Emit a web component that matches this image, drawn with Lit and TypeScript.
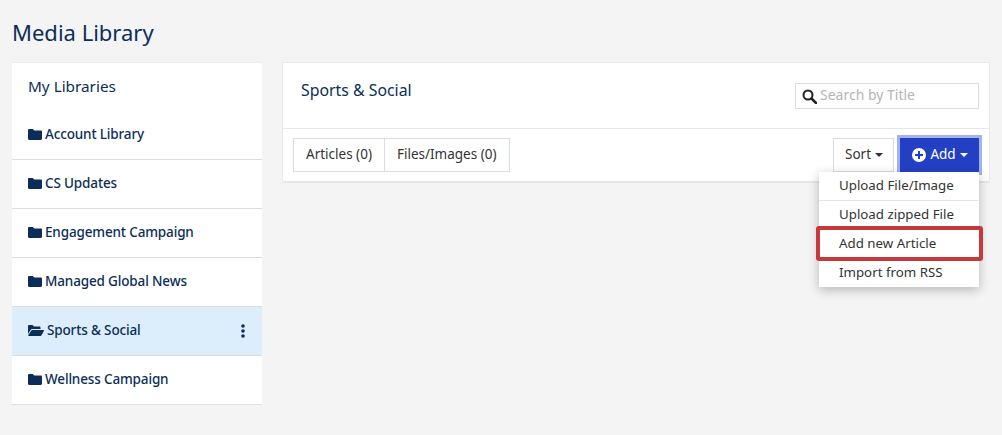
import { LitElement, html, css } from 'lit';
import { customElement } from 'lit/decorators.js';

const libraries = ['Account Library', 'CS Updates', 'Engagement Campaign', 'Managed Global News', 'Sports & Social', 'Wellness Campaign'];
const ACTIVE = 'Sports & Social';

const folder = html`<svg class="folder" viewBox="0 0 14 11"><path d="M1.2 0h3.6l1.4 1.5h6.6c.7 0 1.2.5 1.2 1.2v7.1c0 .7-.5 1.2-1.2 1.2H1.2C.5 11 0 10.500 0 9.800V1.200C0 .5.5 0 1.200 0z"/></svg>`;
const folderOpen = html`<svg class="folder open" viewBox="0 0 16 11"><path d="M0 9V1.200C0 .5.500 0 1.200 0h3.400l1.400 1.500h5.300c.7 0 1.200.5 1.200 1.200V4H4.200C3.500 4 2.900 4.400 2.600 5L0 9z"/><path d="M4.300 5h11c.5 0 .8.500.6 1l-2.400 4.300c-.2.400-.6.700-1.100.7H.9c-.5 0-.8-.5-.6-1l2.900-4.300c.2-.4.600-.7 1.100-.7z"/></svg>`;

@customElement('app-root')
export class AppRoot extends LitElement {
  static styles = css`
    :host {
      display: block;
      height: 435px;
      overflow: hidden;
      background: #f4f4f4;
      color: #0b2e58;
      font-family: 'Noto Sans', 'Open Sans', sans-serif;
      font-size: 14px;
    }

    h1 {
      margin: 0;
      padding: 16px 12px 0;
      height: 62px;
      box-sizing: border-box;
      font-size: 22px;
      line-height: 32px;
      font-weight: 400;
    }

    .page {
      display: flex;
      align-items: flex-start;
      gap: 20px;
      padding: 0 12px;
    }

    .sidebar {
      width: 250px;
      flex: none;
      background: #fff;
      border-top: 1px solid #eee;
    }

    .sidebar h2 {
      margin: 0;
      height: 48px;
      padding: 11px 16px 0;
      box-sizing: border-box;
      font-size: 15.300px;
      line-height: 24px;
      font-weight: 400;
    }

    .lib {
      display: flex;
      align-items: center;
      height: 49px;
      box-sizing: border-box;
      padding: 0 16px 1px;
      gap: 3px;
      border-bottom: 1px solid #ddd;
      font-size: 13.500px;
      letter-spacing: -0.15px;
      font-weight: 500;
    }

    .lib span {
      padding-bottom: 2px;
    }

    .lib.active {
      background: #dcedfb;
    }

    .folder {
      width: 14px;
      height: 11px;
      fill: #0b2e58;
      flex: none;
    }

    .folder.open {
      width: 16px;
    }

    .dots {
      margin-left: auto;
      width: 4px;
      height: 14px;
      margin-right: 1px;
      fill: #0b2e58;
    }

    .panel {
      width: 708px;
      flex: none;
      box-sizing: border-box;
      background: #fff;
      border: 1px solid #eaeaea;
      border-bottom: 2px solid #e6e6e6;
      height: 121px;
    }

    .head {
      display: flex;
      justify-content: space-between;
      height: 66px;
      box-sizing: border-box;
      padding: 0 10px 0 18px;
      border-bottom: 1px solid #e6e6e6;
    }

    .head h2 {
      margin: 0;
      padding-top: 15px;
      font-size: 15.850px;
      line-height: 24px;
      font-weight: 400;
    }

    .search {
      display: flex;
      align-items: center;
      gap: 3px;
      align-self: flex-start;
      margin-top: 20px;
      width: 184px;
      height: 26px;
      box-sizing: border-box;
      padding: 0 6px;
      border: 1px solid #ddd;
      color: #b5b5b5;
      font-size: 14px;
    }

    .search span {
      padding-bottom: 4px;
    }

    .search svg {
      width: 15px;
      height: 15px;
      flex: none;
    }

    .bar {
      display: flex;
      align-items: flex-start;
      padding: 9px 10px 0;
      gap: 6px;
    }

    .tabs {
      display: flex;
      margin-right: auto;
      height: 34px;
      border: 1px solid #ddd;
      box-sizing: border-box;
      color: #333;
    }

    .tabs span {
      display: flex;
      align-items: center;
      padding: 0 12px 2px;
      font-size: 13.500px;
    }

    .tabs span + span {
      border-left: 1px solid #ddd;
    }

    .btn {
      display: flex;
      align-items: center;
      justify-content: center;
      height: 34px;
      box-sizing: border-box;
      gap: 4px;
      padding: 0 0 2px 1px;
      font-size: 13.500px;
    }

    .sort {
      width: 61px;
      border: 1px solid #ddd;
      color: #333;
    }

    .caret {
      width: 0;
      height: 0;
      margin-top: 2px;
      border-left: 4.500px solid transparent;
      border-right: 4.500px solid transparent;
      border-top: 4.500px solid currentColor;
    }

    .add-wrap {
      position: relative;
    }

    .add {
      width: 79px;
      background: #2340c4;
      color: #fff;
      box-shadow: 0 0 0 3px #a3b1ec;
    }

    .add svg {
      width: 14px;
      height: 14px;
      margin-top: 2px;
      fill: #fff;
    }

    .menu {
      position: absolute;
      top: 34px;
      right: 0;
      width: 160px;
      height: 115px;
      background: #fff;
      box-shadow: 0 3px 10px rgba(0, 0, 0, 0.25);
      color: #333;
      font-size: 13.300px;
    }

    .menu div {
      position: relative;
      height: 29px;
      box-sizing: border-box;
      padding-left: 20px;
      line-height: 27px;
    }

    .menu .sep {
      border-bottom: 1px solid #e5e5e5;
    }

    .mark {
      position: absolute;
      left: -3px;
      right: -4px;
      top: -4px;
      height: 35px;
      box-sizing: border-box;
      border: 4px solid #c43a3c;
      border-radius: 3px;
    }
  `;

  render() {
    return html`
      <h1>Media Library</h1>
      <div class="page">
        <nav class="sidebar">
          <h2>My Libraries</h2>
          ${libraries.map((name) => html`
            <div class="lib ${name === ACTIVE ? 'active' : ''}">
              ${name === ACTIVE ? folderOpen : folder}
              <span>${name}</span>
              ${name === ACTIVE ? html`<svg class="dots" viewBox="0 0 4 14"><circle cx="2" cy="2" r="1.800"/><circle cx="2" cy="7" r="1.800"/><circle cx="2" cy="12" r="1.800"/></svg>` : ''}
            </div>
          `)}
        </nav>
        <section class="panel">
          <div class="head">
            <h2>Sports &amp; Social</h2>
            <div class="search">
              <svg viewBox="0 0 15 15" fill="none" stroke="#222"><circle cx="6" cy="6" r="4.500" stroke-width="2"/><path d="M9.500 9.500L14 14" stroke-width="2.500" stroke-linecap="round"/></svg>
              <span>Search by Title</span>
            </div>
          </div>
          <div class="bar">
            <div class="tabs"><span>Articles (0)</span><span>Files/Images (0)</span></div>
            <div class="btn sort">Sort <i class="caret"></i></div>
            <div class="add-wrap">
              <div class="btn add">
                <svg viewBox="0 0 14 14"><path fill-rule="evenodd" d="M7 0a7 7 0 1 1 0 14A7 7 0 0 1 7 0zM6 3v3H3v2h3v3h2V8h3V6H8V3z"/></svg>
                Add <i class="caret"></i>
              </div>
              <div class="menu">
                <div class="sep">Upload File/Image</div>
                <div>Upload zipped File</div>
                <div>Add new Article<span class="mark"></span></div>
                <div>Import from RSS</div>
              </div>
            </div>
          </div>
        </section>
      </div>
    `;
  }
}
